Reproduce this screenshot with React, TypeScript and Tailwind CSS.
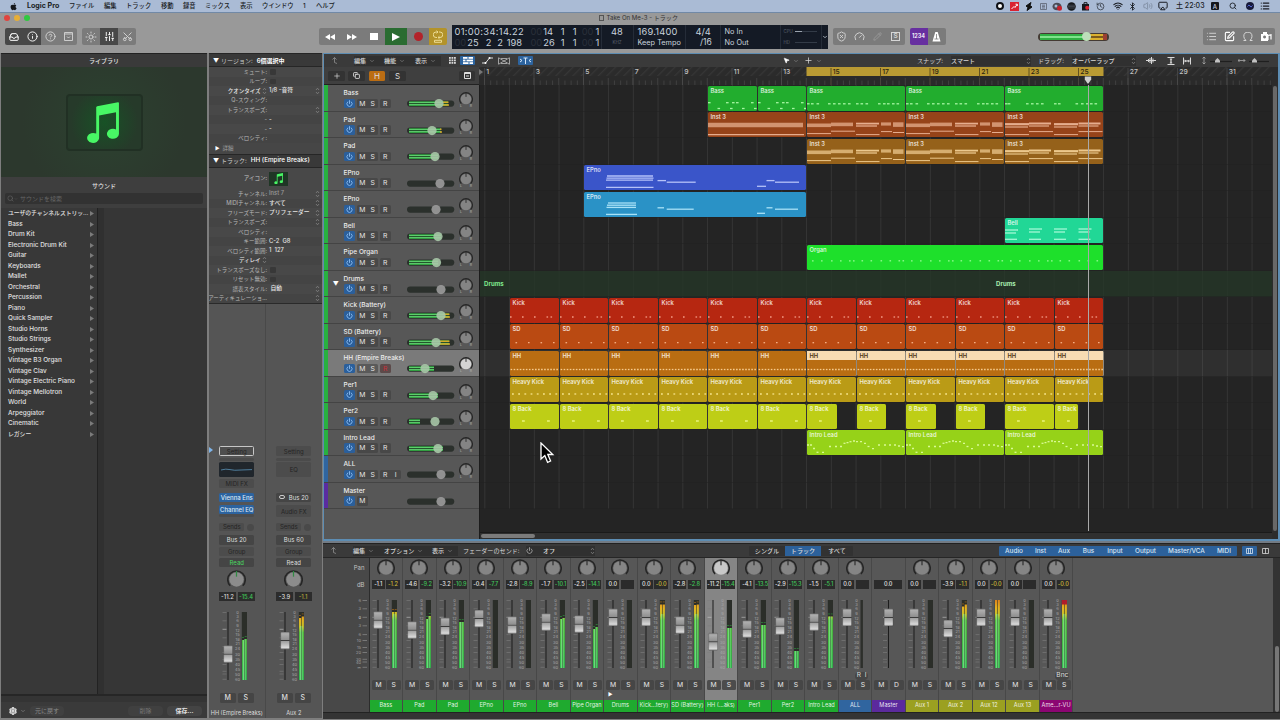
import React from 'react';
import { Inbox, Info, CircleHelp, SlidersVertical, Scissors, Search, Wifi, Bluetooth, Volume2, Airplay, List, SquarePen, History, Settings, Power, ChevronDown, Gauge, Pencil, Sun, Plus, Copy, MousePointer2, ShieldX } from 'lucide-react';

const BAR = 24.75;

type Track = {
  name: string;
  color: string;
  thumb: number;
  level?: number;
  yellow?: number;
  buttons?: string;
};

const GREEN = '#28b13f';

const TRACKS: Track[] = [
  { name: 'Bass', color: GREEN, thumb: 32, level: 41, yellow: 36 },
  { name: 'Pad', color: GREEN, thumb: 25, level: 34, yellow: 33 },
  { name: 'Pad', color: GREEN, thumb: 28, level: 31 },
  { name: 'EPno', color: GREEN, thumb: 33 },
  { name: 'EPno', color: GREEN, thumb: 29 },
  { name: 'Bell', color: GREEN, thumb: 31, level: 34 },
  { name: 'Pipe Organ', color: GREEN, thumb: 29.5, level: 31 },
  { name: 'Drums', color: GREEN, thumb: 34 },
  { name: 'Kick (Battery)', color: GREEN, thumb: 34, level: 42, yellow: 36 },
  { name: 'SD (Battery)', color: GREEN, thumb: 29, level: 42, yellow: 33 },
  { name: 'HH (Empire Breaks)', color: GREEN, thumb: 18, level: 27 },
  { name: 'Per1', color: GREEN, thumb: 26, level: 31 },
  { name: 'Per2', color: GREEN, thumb: 28, level: 13 },
  { name: 'Intro Lead', color: GREEN, thumb: 31, level: 36 },
  { name: 'ALL', color: '#30659f', thumb: 34, buttons: 'MSRI' },
  { name: 'Master', color: '#5a2ca0', thumb: 34, buttons: 'M' },
];

// note = [x, y, length, thickness]
type Note = [number, number, number, number?];
type Region = { start: number; end: number; notes: Note[]; selected?: boolean };
type Lane = { label: string; color: string; note: string; regions: Region[] };

const dots = (xs: number[], y: number, len = 1.6): Note[] => xs.map((x) => [x, y, len] as Note);
const every = (from: number, step: number, end: number) => {
  const out: number[] = [];
  for (let x = from; x < end; x += step) out.push(x);
  return out;
};

const bassA: Note[] = [...dots([0, 18, 24, 28, 43], 16.7, 2.6), ...dots([9.5, 22, 34, 46], 22.5, 2.6)];
const bassB = dots([0, 4, 9.5, 21, 26, 31, 36, 41, 49, 53.5, 58.5, 71, 76, 80, 85, 89.5], 17.8, 2.6);
const bassC = dots([0, 2.8, 21, 26, 31, 36, 49, 53, 70.5, 76, 81, 85, 89.5], 17.8, 2.6);
const instA: Note[] = [[0, 13, 95, 4.6], [0, 22.6, 96, 1.2]];
const instB: Note[] = [
  [0, 13.3, 24, 3.6], [24, 12.4, 22, 3.6], [49, 11.6, 23, 1.8], [49, 14, 21, 1.3], [74, 12, 10, 3.2], [86, 12.6, 10.5, 4.6],
  [0, 21.6, 24, 1], [24, 19.2, 24, 1], [49, 22.6, 23.5, 1], [74, 19.6, 11, 1], [86, 20.5, 11, 1],
];
const instC: Note[] = [
  [0, 12.2, 24, 2.2], [0, 15, 23, 1.2], [24, 11.5, 22, 2], [24, 14, 20, 1.2], [49, 12.2, 24, 2.2], [49, 15, 23, 1.2], [73.5, 11.5, 22, 2], [73.5, 14, 20, 1.2],
  [0, 22.6, 24, 1], [24, 19.6, 24, 1], [49, 22.6, 24, 1], [73.5, 19.6, 24, 1],
];
const leadA: Note[] = ([
  [0, 15], [3, 15], [6, 18.5], [9.5, 22.3], [15, 22.3], [22, 16.5], [28, 16.5], [33, 16.5], [36.5, 13.3], [39.5, 12.6], [42.5, 11.7], [46, 11], [49, 11.7],
  [53, 11.7], [57, 13.3], [60.5, 16.5], [65, 18.6], [71, 15], [77, 15], [82, 15], [87, 15], [91, 16], [95, 16.7],
] as number[][]).map(([x, y]) => [x, y, 2] as Note);

const starts = [2, 4, 6, 8, 10, 12, 14, 16, 18, 20, 22, 24];
const loop = (notes: Note[]): Region[] => starts.map((s) => ({ start: s, end: s + 2, notes }));
const organ = every(0, 49.5, 297).flatMap((o) => [5, 14, 24, 33, 42, 46].map((x) => x + o)).filter((x) => x < 290);

const LANES: (Lane | null)[] = [
  {
    label: 'Bass', color: '#22ad2e', note: '#a6f5a2', regions: [
      { start: 10, end: 12, notes: bassA }, { start: 12, end: 14, notes: bassA }, { start: 14, end: 18, notes: bassB },
      { start: 18, end: 22, notes: bassB }, { start: 22, end: 26, notes: bassC },
    ],
  },
  {
    label: 'Inst 3', color: '#964319', note: '#e6ad8e', regions: [
      { start: 10, end: 14, notes: instA }, { start: 14, end: 18, notes: instB }, { start: 18, end: 22, notes: instB }, { start: 22, end: 26, notes: instC },
    ],
  },
  {
    label: 'Inst 3', color: '#95611a', note: '#ecc88d', regions: [
      { start: 14, end: 18, notes: instB }, { start: 18, end: 22, notes: instB }, { start: 22, end: 26, notes: instC },
    ],
  },
  {
    label: 'EPno', color: '#3a55c9', note: '#b5c2f8', regions: [{
      start: 5, end: 14, notes: [
        [23, 11, 46], [22.5, 13.2, 47], [22, 15.2, 47], [22, 22.4, 47.5], [73.5, 15.6, 8.5], [82.7, 17.2, 29],
        [173, 21.3, 9], [182.5, 15.6, 8], [191, 17.2, 24],
      ],
    }],
  },
  {
    label: 'EPno', color: '#2a92c6', note: '#a9e2f7', regions: [{
      start: 5, end: 14, notes: [
        [24, 11, 28], [23, 13.2, 29], [22.5, 15.4, 29.5], [22, 22.4, 31], [73.5, 15.8, 6.5], [82.7, 17.2, 27],
        [173, 21.3, 8], [182.5, 15.8, 6], [191, 17.2, 23],
      ],
    }],
  },
  {
    label: 'Bell', color: '#21d796', note: '#a4f7d6', regions: [{
      start: 22, end: 26, notes: [0, 24, 49, 73.5].flatMap((x, i) => [[x, i ? 11 : 12, 13], [x, i ? 14 : 15, 11], [x, 21.3, 12]] as Note[]),
    }],
  },
  { label: 'Organ', color: '#1ee02b', note: '#95fa93', regions: [{ start: 14, end: 26, notes: dots(organ, 15.8) }] },
  null,
  { label: 'Kick', color: '#b62711', note: '#f39a84', regions: loop(dots([0, 12, 24, 36.5, 40.5], 19)) },
  { label: 'SD', color: '#ba4a12', note: '#f5ae84', regions: loop(dots([5.5, 18, 30.5, 43], 18.7)) },
  { label: 'HH', color: '#b96d12', note: '#f7cb8b', regions: loop(dots(every(0.6, 3.05, 48), 18.5)).map((r) => ({ ...r, selected: r.start >= 14 })) },
  { label: 'Heavy Kick', color: '#ba9b16', note: '#f6e48d', regions: loop(dots(every(2, 6.2, 48), 17, 1.8)) },
  {
    label: '8 Back', color: '#bece16', note: '#f0f98e', regions: starts.map((s) => ({
      start: s,
      end: s >= 14 && s < 22 ? s + 1.25 : s === 24 ? 25 : s + 2,
      notes: dots([12, 37], 17, 2.8),
    })),
  },
  { label: 'Intro Lead', color: '#96d218', note: '#d9f994', regions: [14, 18, 22].map((s) => ({ start: s, end: s + 4, notes: leadA })) },
  null,
  null,
];

type Strip = {
  name: string;
  color: string;
  db: string;
  peak?: string;
  peakColor?: string;
  cap: number;
  meter?: [number, number];
  kind?: 'mono' | 'master';
  clip?: boolean;
};

const G = '#1faa2f';
const Y = '#9ba021';
const STRIPS: Strip[] = [
  { name: 'Bass', color: G, db: '-1.1', peak: '-1.2', peakColor: '#cdbb38', cap: 20, meter: [12, 12] },
  { name: 'Pad', color: G, db: '-4.6', peak: '-9.2', cap: 30, meter: [19, 16] },
  { name: 'Pad', color: G, db: '-3.2', peak: '-10.9', cap: 26.3, meter: [22, 22] },
  { name: 'EPno', color: G, db: '-0.4', peak: '-7.7', cap: 18.5 },
  { name: 'EPno', color: G, db: '-2.8', peak: '-8.9', cap: 25 },
  { name: 'Bell', color: G, db: '-1.7', peak: '-10.1', cap: 22, meter: [19, 18] },
  { name: 'Pipe Organ', color: G, db: '-2.5', peak: '-14.1', cap: 24, meter: [29, 27] },
  { name: 'Drums', color: G, db: '0.0', cap: 17.3 },
  { name: 'Kick...tery)', color: G, db: '0.0', peak: '-0.0', peakColor: '#cdbb38', cap: 17.3, meter: [4.5, 4.5] },
  { name: 'SD (Battery)', color: G, db: '-2.8', peak: '-2.8', cap: 25, meter: [5, 4.5] },
  { name: 'HH (...aks)', color: G, db: '-11.2', peak: '-15.4', cap: 41.7, meter: [28, 28] },
  { name: 'Per1', color: G, db: '-4.1', peak: '-13.5', cap: 29, meter: [25, 25] },
  { name: 'Per2', color: G, db: '-2.9', peak: '-15.3', cap: 26, meter: [51, 51] },
  { name: 'Intro Lead', color: G, db: '-1.5', peak: '-5.1', cap: 22, meter: [16.5, 16.5] },
  { name: 'ALL', color: '#30659f', db: '0.0', cap: 17.3, kind: 'mono' },
  { name: 'Master', color: '#5b2a9d', db: '0.0', cap: 17.3, kind: 'master' },
  { name: 'Aux 1', color: Y, db: '0.0', cap: 17.3 },
  { name: 'Aux 2', color: Y, db: '-3.9', peak: '-1.1', peakColor: '#cdbb38', cap: 28.5, meter: [6.5, 4.5] },
  { name: 'Aux 12', color: Y, db: '0.0', peak: '-0.0', peakColor: '#cdbb38', cap: 17.3, meter: [0, 0] },
  { name: 'Aux 13', color: Y, db: '0.0', cap: 17.3 },
  { name: 'Ame...r-VU', color: '#8b0672', db: '0.0', peak: '-0.0', peakColor: '#cdbb38', cap: 17.3, meter: [0, 0], clip: true },
];

const LIBRARY = [
  'ユーザのチャンネルストリッ…', 'Bass', 'Drum Kit', 'Electronic Drum Kit', 'Guitar', 'Keyboards', 'Mallet', 'Orchestral', 'Percussion', 'Piano',
  'Quick Sampler', 'Studio Horns', 'Studio Strings', 'Synthesizer', 'Vintage B3 Organ', 'Vintage Clav', 'Vintage Electric Piano',
  'Vintage Mellotron', 'World', 'Arpeggiator', 'Cinematic', 'レガシー',
];

const SCALE: [string, number][] = [
  ['0', 0.3], ['3', 4.5], ['6', 8.9], ['9', 13.4], ['12', 18], ['15', 22.5], ['18', 27], ['21', 31.7], ['24', 36.3], ['30', 42], ['35', 47.3],
  ['40', 52.3], ['45', 57.2], ['50', 62.4], ['60', 67.2],
];
const FADER_TICKS = [0.5, 8.8, 17.3, 25.8, 34.6, 40.5, 47.5, 52.5, 59.3, 62, 67.3];

const Updown = () => (
  <svg width="5" height="8" viewBox="0 0 5 8" className="shrink-0 text-[#8a8a8a]">
    <path d="M1 3 L2.5 1.2 L4 3 M1 5 L2.5 6.8 L4 5" fill="none" stroke="currentColor" strokeWidth="0.7" />
  </svg>
);

const Chevron = () => <ChevronDown size={6} strokeWidth={2} className="shrink-0 text-[#9a9a9a]" />;

const NoteIcon = ({ size }: { size: number }) => (
  <svg width={size} height={size * 1.26} viewBox="0 0 34 43">
    <path
      d="M10.5 5.5 Q10.5 4.6 11.5 4.3 L33 .2 Q34 .1 34 1.1 V33 A6.2 5.2 0 1 1 31 28.4 V10.5 L13.5 14 V37.5 A6.2 5.2 0 1 1 10.5 32.7 Z"
      fill="#48f765"
    />
  </svg>
);

const Knob = ({ size, face, pointer = '#2b2b2b' }: { size: number; face: string; pointer?: string }) => (
  <svg width={size} height={size} viewBox="0 0 20 20" className="shrink-0">
    <path d="M3.4 16.6 A9.2 9.2 0 1 1 16.6 16.6" fill="none" stroke="#262626" strokeWidth="1.7" />
    <circle cx="10" cy="10" r="7.6" fill={face} />
    <path d="M10 1 V7" stroke={pointer} strokeWidth="1.3" />
  </svg>
);

const Fader = ({ cap, meter, kind, clip }: { cap: number; meter?: [number, number]; kind?: string; clip?: boolean }) => {
  const x = kind === 'master' ? 16.5 : 9;
  return (
    <svg width="33" height="76" viewBox="0 -4 33 76" className="block shrink-0">
      <defs>
        <linearGradient id="meterFill" gradientUnits="userSpaceOnUse" x1="0" y1="0" x2="0" y2="68">
          <stop offset="0" stopColor="#e0841c" />
          <stop offset="0.12" stopColor="#e5b321" />
          <stop offset="0.22" stopColor="#c4c22a" />
          <stop offset="0.3" stopColor="#55bd3e" />
          <stop offset="1" stopColor="#35b950" />
        </linearGradient>
        <linearGradient id="capFill" x1="0" y1="0" x2="0" y2="1">
          <stop offset="0" stopColor="#8c8c8c" />
          <stop offset="0.1" stopColor="#adadad" />
          <stop offset="0.46" stopColor="#8f8f8f" />
          <stop offset="0.5" stopColor="#2f2f2f" />
          <stop offset="0.55" stopColor="#a0a0a0" />
          <stop offset="0.9" stopColor="#d8d8d8" />
          <stop offset="1" stopColor="#8a8a8a" />
        </linearGradient>
      </defs>
      {FADER_TICKS.map((y) => (
        <path key={y} d={`M${x - 5.5} ${y} h4`} stroke={y === 17.3 ? '#c8c8c8' : '#7d7d7d'} strokeWidth="0.6" />
      ))}
      <rect x={x - 0.5} y="0" width="1" height="68" fill="#1d1d1d" />
      {kind !== 'master' && SCALE.map(([t, y]) => (
        <text key={t} x="18.6" y={y + 1.5} textAnchor="middle" fontSize="4" fill="#a8a8a8">{t}</text>
      ))}
      {kind === 'mono' && <rect x="22.5" y="0" width="2.4" height="68" fill="#2d2f2b" />}
      {!kind && (
        <>
          <rect x="22.8" y="0" width="5.2" height="68" fill="#2b2e29" />
          {meter && meter.map((top, i) => (
            <g key={i}>
              <rect x={23 + i * 2.7} y={top} width="2.2" height={68 - top} fill="url(#meterFill)" />
              <rect x={24 + i * 1.7} y={Math.max(top, 14)} width="0.6" height={68 - Math.max(top, 14)} fill="#8bf09a" />
              {top > 4 && <rect x={23 + i * 2.7} y={Math.max(1, top - 3)} width="2" height="0.9" fill={top < 14 ? '#8d5d1b' : '#2d7a38'} />}
            </g>
          ))}
          {clip && <rect x="22.8" y="0" width="5.2" height="4.5" fill="#b01d2a" />}
        </>
      )}
      <rect x={x - 4.3} y={cap - 8.5} width="8.8" height="17.2" rx="0.8" fill="url(#capFill)" stroke="#404040" strokeWidth="0.3" />
    </svg>
  );
};

const MenuBar = () => {
  const items: [string, string][] = [
    ['ファイル', 'w-[35px]'], ['編集', 'w-[22px]'], ['トラック', 'w-[35px]'], ['移動', 'w-[22px]'], ['録音', 'w-[22px]'],
    ['ミックス', 'w-[35px]'], ['表示', 'w-[22px]'], ['ウインドウ', 'w-[41px]'], ['1', 'w-[13px]'], ['ヘルプ', 'w-[30px]'],
  ];
  return (
    <div className="flex h-[12px] items-center bg-[#aabbd5] text-[6.3px] font-medium text-[#1a1d24]">
      <svg width="9" height="9" viewBox="0 0 24 24" className="ml-[9px]">
        <path fill="#15171c" d="M17.6 12.7c0-2.5 2-3.7 2.1-3.8-1.2-1.7-3-1.9-3.6-1.9-1.5-.2-3 .9-3.7.9-.8 0-2-.9-3.2-.9-1.7 0-3.2 1-4.1 2.4-1.7 3-.4 7.4 1.3 9.8.8 1.2 1.8 2.5 3.1 2.5 1.2-.1 1.7-.8 3.2-.8s1.9.8 3.2.8c1.3 0 2.2-1.2 3-2.4.9-1.4 1.3-2.7 1.3-2.8-.1 0-2.6-1-2.6-3.8zM15.2 5.5c.7-.8 1.1-2 1-3.1-1 0-2.2.7-2.9 1.5-.6.7-1.2 1.9-1 3 1.1.1 2.2-.6 2.9-1.4z" />
      </svg>
      <span className="ml-[9px] w-[42px] text-[7.1px] font-bold">Logic Pro</span>
      {items.map(([t, w]) => <span key={t} className={`${w} h-[9px] shrink-0 leading-[9px] whitespace-nowrap`}>{t}</span>)}
      <div className="ml-auto flex items-center pr-[10px]">
        <span className="mr-[6px] size-[8px] rounded-full border-[2.5px] border-[#0d0f14] bg-white" />
        <svg width="9" height="9" viewBox="0 0 9 9" className="mr-[6px]"><rect width="9" height="9" fill="#d92432" /><path d="M1.5 7 L4 4.5 L5 5.5 L7 2.5 M5.5 2.2 H7.3 V4" stroke="#fff" fill="none" /></svg>
        <svg width="8" height="9" viewBox="0 0 8 9" className="mr-[7px]"><path d="M6 .5 L1 4 L3 5.5 L2 8.5 L7 5 L5 3.5 Z" fill="#111" stroke="#111" /></svg>
        <svg width="7" height="7" viewBox="0 0 7 7" className="mr-[5px]"><path d="M.5.5h6v6h-6z M2 2.2h3 M2 3.6h3 M2 5h3" fill="none" stroke="#5b6270" strokeWidth=".8" /></svg>
        <svg width="11" height="9" viewBox="0 0 11 9" className="mr-[4px]"><ellipse cx="5" cy="4.5" rx="4.5" ry="3.8" fill="#4b4b55" /><circle cx="4" cy="4" r="1.5" fill="#aabbd5" /><circle cx="7.5" cy="6.2" r="2.5" fill="#c8202c" /></svg>
        <svg width="9" height="9" viewBox="0 0 9 9" className="mr-[5px]"><circle cx="4.5" cy="4.5" r="4.3" fill="#16181d" /><path d="M1 3.2h7M1 4.6h7M1 6h7" stroke="#69707e" strokeWidth=".5" /></svg>
        <svg width="9" height="9" viewBox="0 0 9 9" className="mr-[6px]"><rect x="1" y="2" width="7" height="6.5" fill="#16181d" /><path d="M3 2V.7h3V2" stroke="#16181d" fill="none" /><circle cx="6.2" cy="5.8" r="2" fill="#d92432" /></svg>
        <History size={9} strokeWidth={2} className="mr-[8px] text-[#30353f]" />
        <Wifi size={10} strokeWidth={2.6} className="mr-[5px]" />
        <Bluetooth size={9} strokeWidth={2.4} className="mr-[6px]" />
        <Volume2 size={10} className="mr-[5px] text-[#7c899e]" />
        <Airplay size={10} strokeWidth={2.4} className="mr-[8px]" />
        <span className="mr-[7px] w-[28px] whitespace-nowrap text-[7px]">土 22:03</span>
        <span className="mr-[10px] flex h-[8px] w-[8px] items-center justify-center rounded-[1px] bg-[#15171c] text-[6px] text-[#c9d4e6]">A</span>
        <Search size={8} strokeWidth={2.6} className="mr-[9px]" />
        <svg width="8" height="8" viewBox="0 0 8 8" className="mr-[6px]"><circle cx="4" cy="4" r="4" fill="#171a3a" /><path d="M1.5 4.5 Q3 2 4 4 T6.5 3.5" stroke="#5b6fe0" fill="none" /></svg>
        <List size={10} strokeWidth={3} />
      </div>
    </div>
  );
};

const Tool = ({ active, children }: { active?: boolean; children?: React.ReactNode }) => (
  <div className={`flex h-[17px] w-[18px] items-center justify-center ${active ? 'bg-[#484848] text-white' : 'bg-[#7b7b7b] text-[#d6d6d6]'}`}>
    {children}
  </div>
);

const Dim = ({ children }: { children: React.ReactNode }) => <span className="text-[#2a303a]">{children}</span>;

const Lcd = () => (
  <div className="ml-[4.5px] flex h-[24px] w-[376px] bg-[#141a25] text-[9.3px] leading-[11.5px] whitespace-pre text-[#c9d3dd]">
    <div className="w-[76px] pt-[1px] pl-[3px]">
      <div className="tracking-[0.35px]">01:00:34:14.22</div>
      <div className="flex"><Dim>00</Dim><span className="w-[19.5px] pl-[1px]">25</span><span className="w-[11.5px]">2</span><span className="w-[9.5px]">2</span><span>198</span></div>
    </div>
    <div className="w-[74px] border-r border-[#252c38] pt-[1px] pl-[3px]">
      {['14', '26'].map((n) => (
        <div key={n} className="flex"><Dim>00</Dim><span className="w-[18.5px] pl-[1px]">{n}</span><span className="w-[12px]">1</span><span className="w-[9px]">1</span><Dim>00</Dim><span className="pl-[2px]">1</span></div>
      ))}
    </div>
    <div className="w-[32px] border-r border-[#252c38] pt-[1px] text-center">
      <div>48</div>
      <div className="text-[4.5px] text-[#5d6672]">KHZ</div>
    </div>
    <div className="w-[52px] border-r border-[#252c38] pt-[1px] pl-[4px]">
      <div className="tracking-[0.2px]">169.1400</div>
      <div className="text-[7.3px]">Keep Tempo</div>
    </div>
    <div className="w-[35px] border-r border-[#252c38] pt-[1px] pl-[10px]">
      <div>4/4</div>
      <div className="pl-[4.5px] text-[8.5px]">/16</div>
    </div>
    <div className="w-[60px] border-r border-[#252c38] pt-[1px] pl-[4px] text-[7.3px]">
      <div>No In</div>
      <div>No Out</div>
    </div>
    <div className="w-[41px] border-r border-[#252c38] pt-[1px] pl-[3px] text-[4.3px] text-[#5d6672]">
      <div className="flex items-center"><span className="w-[11px]">CPU</span><span className="h-[1.5px] w-[7px] bg-[#9aa3ae]" /><span className="h-[1px] w-[15px] bg-[#333b47]" /></div>
      <div className="flex items-center"><span className="w-[11px]">HD</span><span className="h-[1px] w-[22px] bg-[#333b47]" /></div>
    </div>
    <div className="flex flex-1 items-center justify-center"><ChevronDown size={6} strokeWidth={3} /></div>
  </div>
);

const TopBar = () => (
  <div className="h-[41px] bg-[#999999]">
    <div className="flex h-[11px] items-center border-t border-[#7189a6]">
      <span className="ml-[4px] size-[5.5px] rounded-full bg-[#e0443e]" />
      <span className="ml-[4.5px] size-[5.5px] rounded-full bg-[#e6ae37]" />
      <span className="ml-[4.5px] size-[5.5px] rounded-full bg-[#2fc840]" />
      <span className="ml-[569px] h-[6px] w-[5px] border border-[#555]" />
      <span className="ml-[3px] text-[6.1px] text-[#333]">Take On Me-3 - トラック</span>
    </div>
    <div className="flex h-[27px] items-center">
      <div className="ml-[5px] flex overflow-hidden rounded-[2px]">
        <Tool active><Inbox size={10} strokeWidth={2.4} /></Tool>
        <Tool active><Info size={11} /></Tool>
        <Tool><CircleHelp size={11} /></Tool>
        <Tool><svg width="9" height="9" viewBox="0 0 9 9"><path d="M.5.5h8v8h-8z M.5 2h8 M3 4.5l1.5 1.5L6 4.5" fill="none" stroke="currentColor" strokeWidth=".9" /></svg></Tool>
      </div>
      <div className="ml-[5px] flex overflow-hidden rounded-[2px]">
        <Tool><Sun size={12} strokeWidth={1.8} /></Tool>
        <Tool active><SlidersVertical size={11} /></Tool>
        <Tool><Scissors size={11} className="-rotate-90" /></Tool>
      </div>
      <div className="ml-[183px] flex h-[17px] overflow-hidden rounded-[2px] text-white">
        <div className="flex w-[22px] items-center justify-center bg-[#7b7b7b]"><svg width="10" height="6" viewBox="0 0 10 6"><path d="M5 0V6L0 3z M10 0V6L5 3z" fill="currentColor" /></svg></div>
        <div className="flex w-[22px] items-center justify-center bg-[#7b7b7b]"><svg width="10" height="6" viewBox="0 0 10 6"><path d="M0 0V6L5 3z M5 0V6L10 3z" fill="currentColor" /></svg></div>
        <div className="flex w-[22px] items-center justify-center bg-[#7b7b7b]"><span className="size-[7.5px] bg-white" /></div>
        <div className="flex w-[22px] items-center justify-center bg-[#2a6c31]"><svg width="8" height="8" viewBox="0 0 8 8"><path d="M0 0L8 4L0 8z" fill="currentColor" /></svg></div>
        <div className="flex w-[22px] items-center justify-center bg-[#7b7b7b]"><span className="size-[9px] rounded-full bg-[#b3232a]" /></div>
        <div className="flex w-[18px] flex-col items-center justify-center bg-[#b3932a]">
          <svg width="10" height="13" viewBox="0 0 10 13">
            <path d="M4 7.5H3A2.5 2.5 0 0 1 3 2H4.5M6 2H7A2.5 2.5 0 0 1 7 7.5H5.5M3.5.7L5 2L3.5 3.3M6.5 6.2L5 7.5L6.5 8.8M1.5 10.3h7v2h-7z" fill="none" stroke="#f2e3a0" strokeWidth=".9" />
          </svg>
        </div>
      </div>
      <Lcd />
      <div className="ml-[5px] flex overflow-hidden rounded-[2px]">
        <Tool><ShieldX size={11} /></Tool>
        <Tool><Gauge size={11} /></Tool>
        <Tool><Pencil size={9} className="opacity-40" /></Tool>
        <Tool><span className="flex size-[9px] items-center justify-center border border-[#d6d6d6] text-[6.5px] font-semibold">S</span></Tool>
      </div>
      <div className="ml-[5px] flex overflow-hidden rounded-[2px]">
        <div className="flex h-[17px] w-[18px] items-center justify-center bg-[#6730a0] text-[5.6px] font-semibold text-white">1234</div>
        <Tool><svg width="9" height="10" viewBox="0 0 9 10"><path d="M3.3 0h2.4L8.5 9.5h-8z" fill="#fff" /><path d="M4.5 7V2 M2.5 7h4" stroke="#7b7b7b" strokeWidth=".8" /></svg></Tool>
      </div>
      <div className="ml-[92px] flex h-[8px] w-[71px] items-center rounded-full bg-[#443a33] px-[2px]">
        <div className="relative flex h-[6px] w-full overflow-visible">
          <div className="w-[47px] border-y-[2.5px] border-[#2fb043] bg-[#7fe38b]" />
          <div className="w-[16px] border-y-[2.5px] border-[#dbb02e] bg-[#7c5a1c]" />
          <div className="w-[4px] bg-[#9c3f32]" />
          <span className="absolute top-[-1.5px] left-[42px] size-[9px] rounded-full bg-[#bde0ba]" />
        </div>
      </div>
      <div className="ml-[94px] flex overflow-hidden rounded-[2px]">
        <Tool><List size={11} /></Tool>
        <Tool><SquarePen size={11} strokeWidth={2.4} className="text-white" /></Tool>
        <Tool><svg width="10" height="9" viewBox="0 0 10 9"><path d="M.5 8.5H3Q.8 6.5.8 4.3A4 4 0 0 1 9 4.3Q9 6.5 7 8.5H9.5" fill="none" stroke="currentColor" /></svg></Tool>
        <Tool><svg width="12" height="11" viewBox="0 0 12 11"><path d="M1 3h2V1h4v2h1v7H1z M4.5 4.5a1.5 1.5 0 1 0 .1 0" fill="#fff" fillRule="evenodd" /><path d="M8 9V4.5l3-.7V8.5" stroke="#fff" fill="none" strokeWidth="1.2" /></svg></Tool>
      </div>
    </div>
  </div>
);

const Library = () => (
  <div className="ml-px flex h-[665px] w-[206px] shrink-0 flex-col bg-[#373737] text-[6.4px] text-[#e0e0e0]">
    <div className="flex h-[14px] items-center justify-center border-t border-[#222] bg-[#3a3a3a] text-[6px] font-medium">ライブラリ</div>
    <div className="flex h-[110px] items-center justify-center bg-[radial-gradient(circle,#2c4230,#2c382d_70%)]">
      <div className="mt-[1px] flex h-[57px] w-[77px] items-center justify-center rounded-[4px] border-2 border-[#213024] bg-[radial-gradient(circle,#185226,#263a2a_75%)] pr-[4px]">
        <NoteIcon size={33} />
      </div>
    </div>
    <div className="flex h-[16px] items-center justify-center bg-[#3e3e3e] text-[6px] font-medium">サウンド</div>
    <div className="h-[15px] bg-[#3e3e3e] px-[4px]">
      <div className="flex h-[11px] items-center rounded-[2px] bg-[#323232] text-[6px] text-[#666]">
        <Search size={7} className="ml-[2px]" />
        <ChevronDown size={4} />
        <span className="ml-[2px]">サウンドを検索</span>
      </div>
    </div>
    <div className="flex flex-1 border-b-2 border-[#262626]">
      <div className="w-[96px] bg-[#383838] pt-[0.5px] pl-[7px]">
        {LIBRARY.map((name, i) => (
          <div key={name} className="flex h-[10.5px] items-center font-medium">
            <span className={`w-[82px] whitespace-nowrap ${i === 0 || i === 21 ? 'text-[5.8px]' : 'pt-[1px]'}`}>{name}</span>
            <svg width="4" height="5" viewBox="0 0 4 5"><path d="M0 0L4 2.5L0 5z" fill="#7b7b7b" /></svg>
          </div>
        ))}
      </div>
      <div className="w-[7px] border-l border-[#222] bg-[#303030]" />
      <div className="flex-1 bg-[#363636]" />
    </div>
    <div className="flex h-[22px] items-end border-t-[6px] border-[#343434] bg-[#3a3a3a] text-[6px]">
      <div className="flex h-[14px] w-full items-center">
        <Settings size={8} strokeWidth={4} className="ml-[8px]" />
        <span className="ml-[3px]"><Chevron /></span>
        <span className="ml-[4px] h-[10px] w-[34px] rounded-sm bg-[#404040] text-center leading-[10px] text-[#8b8b8b]">元に戻す</span>
        <span className="ml-[64px] h-[10px] w-[35px] rounded-sm bg-[#404040] text-center leading-[10px] text-[#777]">削除</span>
        <span className="ml-[4px] h-[10px] w-[35px] rounded-sm bg-[#444] text-center leading-[10px] font-bold">保存...</span>
      </div>
    </div>
  </div>
);

const ROWS_A: [string, string, boolean][] = [
  ['ミュート:', '□', false], ['ループ:', '□', false], ['クオンタイズ ⌃', '1/8 -音符', true], ['Q-スウィング:', '', false], ['トランスポーズ:', '', true],
  ['-', '-', false], ['-', '-', false], ['ベロシティ:', '', false],
];
const ROWS_B: [string, string, boolean][] = [
  ['チャンネル:', 'Inst 7', true], ['MIDIチャンネル:', 'すべて', true], ['フリーズモード:', 'プリフェーダー', true], ['トランスポーズ:', '', true], ['ベロシティ:', '', false],
  ['キー範囲:', 'C-2  G8', false], ['ベロシティ範囲:', '1  127', false], ['ディレイ ⌃', '', false], ['トランスポーズなし:', '□', false], ['リセット無効:', '□', false],
  ['譜表スタイル:', ' 自動', true], ['アーティキュレーショ…', '', true],
];

const InspectorRows = ({ rows }: { rows: [string, string, boolean][] }) => (
  <>
    {rows.map(([label, value, arrows], i) => {
      const strong = label.includes('⌃');
      return (
        <div key={i} className={`flex h-[9.5px] items-center text-[5.5px] whitespace-pre ${i % 2 ? 'bg-[#444444]' : 'bg-[#484848]'}`}>
          <span className={`flex w-[58px] shrink-0 items-center justify-end ${strong ? 'font-medium text-[#e6e6e6]' : 'text-[#b8b8b8]'}`}>
            {label.replace('⌃', '')}{strong && <Updown />}
          </span>
          {value === '□'
            ? <span className="ml-[3px] size-[5.5px] rounded-[1px] bg-[#383838]" />
            : <span className={`ml-[2px] text-[5.8px] font-medium ${value === 'Inst 7' ? 'text-[#9a9a9a]' : 'text-[#e4e4e4]'}`}>{value}</span>}
          {arrows && <span className="mr-[2px] ml-auto"><Updown /></span>}
        </div>
      );
    })}
  </>
);

const Slot = ({ cls, children }: { cls: string; children?: React.ReactNode }) => (
  <div className={`flex w-[35px] items-center justify-center rounded-[1.5px] whitespace-nowrap ${cls}`}>{children}</div>
);

const InspectorStrip = ({ first }: { first?: boolean }) => (
  <div className={`flex w-[57px] flex-col items-center pt-[142px] text-[6px] text-[#242424] ${first ? 'border-r border-[#494949]' : ''}`}>
    <Slot cls={first ? 'h-[10px] border border-[#c6c6c6] bg-[#4e4e4e]' : 'h-[10px] bg-[#4c4c4c]'}>Setting</Slot>
    <Slot cls="mt-[2px] h-[3px] bg-[#4b4b4b]" />
    {first ? (
      <Slot cls="mt-[1px] h-[15px] bg-[#20262c]">
        <svg width="31" height="6" viewBox="0 0 31 6"><path d="M0 3 Q5 1.5 9 2.6 T20 3 L31 2.6" stroke="#5a93b8" fill="none" strokeWidth=".8" /></svg>
      </Slot>
    ) : <Slot cls="mt-[1px] h-[15px] bg-[#4c4c4c]">EQ</Slot>}
    <Slot cls={first ? 'mt-[2px] h-[9px] bg-[#4c4c4c]' : 'mt-[2px] h-[9px]'}>{first ? 'MIDI FX' : ''}</Slot>
    <Slot cls={first ? 'mt-[4.5px] h-[9px] bg-[#2c639f] font-medium text-[#dce8f5]' : 'mt-[4.5px] h-[9px] bg-[#454545] text-[#dedede]'}>
      {first ? 'Vienna Ens' : <><span className="mr-[4px] h-[4px] w-[6px] rounded-full border border-[#ccc]" />Bus 20</>}
    </Slot>
    <Slot cls={first ? 'mt-[3.5px] h-[9px] bg-[#2c639f] font-medium text-[#dce8f5]' : 'mt-[3.5px] h-[12px] bg-[#4c4c4c]'}>{first ? 'Channel EQ' : 'Audio FX'}</Slot>
    {first && <Slot cls="h-[3px] bg-[#4c4c4c]" />}
    <div className="mt-[6px] flex w-[35px] items-center justify-between">
      <span className="h-[8px] w-[25px] rounded-[1.5px] bg-[#4c4c4c] text-center leading-[8px]">Sends</span>
      <span className="size-[7px] rounded-full bg-[#494949]" />
    </div>
    <Slot cls="mt-[4px] h-[9.5px] bg-[#454545] text-[#dedede]">{first ? 'Bus 20' : 'Bus 60'}</Slot>
    <Slot cls="mt-[2px] h-[9px] bg-[#4c4c4c]">Group</Slot>
    <Slot cls={`mt-[2px] h-[9.5px] bg-[#454545] ${first ? 'text-[#4ad861]' : 'text-[#dedede]'}`}>Read</Slot>
    <div className="mt-[3px]"><Knob size={19} face="#8c8c8c" pointer="#2f8a43" /></div>
    <div className="mt-[3px] flex gap-[1.5px] text-[5.8px] leading-[9px] font-medium">
      <span className="h-[9px] w-[17px] bg-[#2c2c2c] text-center text-[#dcdcdc]">{first ? '-11.2' : '-3.9'}</span>
      <span className={`h-[9px] w-[17px] bg-[#2c2c2c] text-center ${first ? 'text-[#3fc457]' : 'text-[#b0a53a]'}`}>{first ? '-15.4' : '-1.1'}</span>
    </div>
    <div className="mt-[7px] ml-[-2px]"><Fader cap={first ? 42 : 28.5} meter={first ? [28, 27] : [6, 4.5]} /></div>
    <div className="mt-[9px] flex gap-[2px] text-[7px] leading-[9.5px] font-medium text-[#ddd]">
      <span className="h-[9.5px] w-[16px] rounded-[1.5px] bg-[#454545] text-center">M</span>
      <span className="h-[9.5px] w-[16px] rounded-[1.5px] bg-[#454545] text-center">S</span>
    </div>
    <div className="mt-[5px] text-[5.6px] leading-[10px] whitespace-nowrap text-[#dcdcdc]">{first ? 'HH (Empire Breaks)' : 'Aux 2'}</div>
  </div>
);

const Inspector = () => (
  <div className="relative ml-[2px] h-[665px] w-[113px] shrink-0 overflow-hidden bg-[#555555]">
    <div className="flex h-[14px] items-center border-y border-[#262626] bg-[#393939] pl-[4px] text-[6px] text-[#ccc]">
      <span className="mr-[2px] text-[6px] text-white">▼</span>リージョン:<span className="ml-[4px] font-semibold text-white">6個選択中</span>
    </div>
    <InspectorRows rows={ROWS_A} />
    <div className="flex h-[10.5px] items-center bg-[#464646] pl-[6px] text-[5.5px] text-[#a0a0a0]"><span className="mr-[3px] text-[5px] text-white">▶</span>詳細</div>
    <div className="flex h-[14.5px] items-center border-y border-[#262626] bg-[#393939] pl-[4px] text-[6px] text-[#ccc]">
      <span className="mr-[2px] text-[6px] text-white">▼</span>トラック:<span className="ml-[4px] text-[6.3px] font-medium whitespace-nowrap text-white">HH (Empire Breaks)</span>
    </div>
    <div className="flex h-[21px] items-center bg-[#484848] text-[5.5px] text-[#c4c4c4]">
      <span className="w-[58px] text-right">アイコン:</span>
      <span className="ml-[2px] flex h-[14px] w-[19px] items-center justify-center bg-[#1f3625]"><NoteIcon size={9} /></span>
    </div>
    <InspectorRows rows={ROWS_B} />
    <div className="flex border-t border-[#2a2a2a]">
      <InspectorStrip first />
      <InspectorStrip />
    </div>
    <svg width="4" height="6" viewBox="0 0 4 6" className="absolute top-[394px] left-0"><path d="M0 0L4 3L0 6z" fill="#7fb5ea" /></svg>
  </div>
);

const Drop = ({ label, w }: { label: string; w: string }) => (
  <div className={`flex h-[10px] shrink-0 items-center bg-[#303030] font-medium ${w}`}>
    <span className="mr-[3px] whitespace-nowrap">{label}</span><Chevron />
  </div>
);

const BackArrow = () => (
  <svg width="6" height="7" viewBox="0 0 6 7" className="mr-[16px] ml-[8px] shrink-0 text-[#8f8f8f]"><path d="M.5 2.5L2.5.5L4.5 2.5M2.5.5V5.5L5 6.5" fill="none" stroke="currentColor" strokeWidth=".8" /></svg>
);

const ArrangeToolbar = () => (
  <div className="flex h-[13px] items-center bg-[#3a3a3a] text-[6.1px] text-[#d8d8d8]">
    <BackArrow />
    <Drop label="編集" w="w-[30px]" />
    <Drop label="機能" w="w-[31px]" />
    <Drop label="表示" w="w-[26px]" />
    <svg width="7" height="7" viewBox="0 0 7 7" className="mr-[4px] ml-[8px] shrink-0">
      {[0, 2.5, 5].flatMap((y) => [0, 2.5, 5].map((x) => <rect key={`${x}-${y}`} x={x} y={y} width="1.8" height="1.8" fill="#d8d8d8" />))}
    </svg>
    <span className="flex h-[9px] w-[15px] shrink-0 items-center justify-center rounded-[1px] bg-[#2d649f]">
      <svg width="10" height="7" viewBox="0 0 10 7" fill="#fff">
        <rect width="4.5" height="1.8" /><rect x="5.5" width="4.5" height="1.8" />
        <rect y="2.6" width="2.5" height="1.8" /><rect x="3.5" y="2.6" width="6.5" height="1.8" />
        <rect y="5.2" width="5.5" height="1.8" /><rect x="6.5" y="5.2" width="3.5" height="1.8" />
      </svg>
    </span>
    <svg width="11" height="7" viewBox="0 0 11 7" className="ml-[7px] shrink-0"><path d="M0 6h3.5L7.5 1H11" fill="none" stroke="#d8d8d8" /><circle cx="3.5" cy="6" r="1" fill="#fff" /><circle cx="7.5" cy="1" r="1" fill="#fff" /></svg>
    <svg width="12" height="8" viewBox="0 0 12 8" className="ml-[5px] shrink-0"><path d="M.5.5v7M11.5.5v7M1 1l5 3L1 7M11 1L6 4l5 3M3 1.5h6M3 6.5h6" fill="none" stroke="#bbb" strokeWidth=".8" /></svg>
    <span className="ml-[8px] flex h-[9px] w-[15px] shrink-0 items-center justify-center rounded-[1px] bg-[#2d649f] text-[#d5e6f8]">
      <svg width="11" height="7" viewBox="0 0 11 7"><path d="M0 2l2 1.5L0 5M11 2L9 3.5L11 5M3.5 1h4M5.5 1v6" fill="none" stroke="currentColor" strokeWidth="1" /></svg>
    </span>
    <MousePointer2 size={7} className="ml-[250px] shrink-0 fill-white text-white" />
    <span className="ml-[3px] shrink-0"><Chevron /></span>
    <Plus size={9} className="ml-[5px] shrink-0" />
    <span className="ml-[3px] shrink-0"><Chevron /></span>
    <span className="ml-[95px] w-[34px] shrink-0 whitespace-nowrap">スナップ:</span>
    <span className="flex h-[10px] w-[80px] shrink-0 items-center bg-[#303030] font-medium"><span className="flex-1">スマート</span><Updown /></span>
    <span className="ml-[7px] w-[34px] shrink-0 whitespace-nowrap">ドラッグ:</span>
    <span className="flex h-[10px] w-[64px] shrink-0 items-center bg-[#303030] font-medium whitespace-nowrap"><span className="flex-1">オーバーラップ</span><Updown /></span>
    <svg width="10" height="7" viewBox="0 0 10 7" className="ml-[10px] shrink-0"><path d="M0 3.5h10M2.5 2v3M4 1v5M5.5 0v7M7 1.5v4" stroke="#d8d8d8" /></svg>
    <svg width="8" height="8" viewBox="0 0 8 8" className="ml-[11px] shrink-0"><path d="M.5.5h7M.5 7.5h7M4 1v6M2.8 2.2L4 3.2L5.2 2.2M2.8 5.8L4 4.8L5.2 5.8" fill="none" stroke="#d8d8d8" strokeWidth="1" /></svg>
    <svg width="8" height="8" viewBox="0 0 8 8" className="ml-[8px] shrink-0"><path d="M.5.5v7M7.5.5v7M1 4h6M2 2.8L3.2 4L2 5.2M6 2.8L4.8 4L6 5.2" fill="none" stroke="#d8d8d8" strokeWidth="1" /></svg>
    <svg width="33" height="9" viewBox="0 0 33 9" className="ml-[10px] shrink-0"><path d="M3 1v7M1.5 2.5L3 1L4.5 2.5M1.5 6.5L3 8L4.5 6.5" fill="none" stroke="#aaa" strokeWidth=".8" /><path d="M9 5.5h22" stroke="#1f1f1f" strokeWidth="1.2" /><path d="M14 6.5V4.5L16.5 2L19 4.5V6.5z" fill="#c2c2c2" /></svg>
    <svg width="33" height="9" viewBox="0 0 33 9" className="ml-[4px] shrink-0"><path d="M0 4.5h7M1.5 3L0 4.5L1.5 6M5.5 3L7 4.5L5.5 6" fill="none" stroke="#aaa" strokeWidth=".8" /><path d="M11 5.5h20" stroke="#1f1f1f" strokeWidth="1.2" /><path d="M14 6.5V4.5L16.5 2L19 4.5V6.5z" fill="#c2c2c2" /></svg>
  </div>
);

const Ruler = () => {
  const bars = Array.from({ length: 32 }, (_, i) => i + 1);
  const x = (bar: number) => 5.5 + (bar - 1) * BAR;
  return (
    <svg width="793" height="18" viewBox="0 0 793 18" className="block shrink-0 bg-[#2a2a2a]" fontSize="7">
      <defs>
        <pattern id="hatch" width="6" height="6" patternUnits="userSpaceOnUse" patternTransform="rotate(45)">
          <rect width="6" height="6" fill="#2b2b2b" /><rect width="1.2" height="6" fill="#363636" />
        </pattern>
      </defs>
      <rect width="793" height="9" fill="url(#hatch)" />
      <rect x="327.5" y="0" width="297" height="9" fill="#b99a33" />
      <path d="M0 2L4 5L0 8z" fill="#777" />
      {bars.map((b) => (
        <g key={b}>
          {b % 2 === 1 && <path d={`M${x(b)} 1V18`} stroke={b > 13 && b < 26 ? '#4a3f1d' : '#4a4a4a'} strokeWidth=".8" />}
          {[0, 1, 2, 3].map((q) => <path key={q} d={`M${x(b) + q * 6.19} ${q ? 13.5 : 11}V18`} stroke="#4b4b4b" strokeWidth=".7" />)}
          {b % 2 === 1 && <text x={x(b) + 1.8} y="7" fontSize="6.8" fontWeight="500" fill={b > 14 && b < 26 ? '#2b2510' : '#c4c4c4'}>{b}</text>}
        </g>
      ))}
      <path d="M605.8 9.5h6.4v3l-2.7 4h-1l-2.7-4z" fill="#cfcfcf" />
    </svg>
  );
};

const TrackHeader = ({ track, index }: { track: Track; index: number }) => {
  const active = index === 10;
  const letters = track.buttons ?? 'MSR';
  return (
    <div className={`flex h-[26.5px] border-b border-[#444444] ${active ? 'bg-[#7a7a7a]' : 'bg-[#575757]'}`}>
      <div className="w-[4px] shrink-0" style={{ backgroundColor: track.color }} />
      <div className="flex w-[15.5px] shrink-0 items-center justify-center text-[6px] text-white">{index === 7 && '▼'}</div>
      <div className="w-[63.5px] shrink-0 pt-[4px]">
        <div className="h-[9.5px] text-[6.5px] leading-[9.5px] font-medium whitespace-nowrap text-[#ececec]">{track.name}</div>
        <div className="flex h-[9.5px] text-[6.8px] leading-[9.5px] text-[#e4e4e4]">
          <span className="flex w-[11px] items-center justify-center rounded-[1.5px] bg-[#2b5f9b]"><Power size={7} strokeWidth={3} className="text-[#8fc0f5]" /></span>
          <span className={`ml-[2.5px] flex rounded-[1.5px] ${active ? 'bg-[#5a5a5a]' : 'bg-[#484848]'}`}>
            {letters.slice(0, 2).split('').map((l) => <span key={l} className="w-[10.5px] text-center">{l}</span>)}
          </span>
          {letters.length > 2 && (
            <span className={`ml-[2px] flex rounded-[1.5px] ${active ? 'bg-[#5c4a4a] text-[#c8303a]' : 'bg-[#484848]'}`}>
              {letters.slice(2).split('').map((l) => <span key={l} className="w-[10.5px] text-center">{l}</span>)}
            </span>
          )}
        </div>
      </div>
      <svg width="48" height="11" viewBox="0 0 48 11" className="mt-[13px] shrink-0">
        <rect x="0" y="2.5" width="47.3" height="6.2" rx="3.1" fill="#2b302c" />
        {track.level && (
          <>
            <rect x="2" y="3.3" width={track.level - 2} height="4.6" fill="#2fa83f" />
            <rect x="2" y="5" width={track.level - 2} height="1.2" fill="#1f4c27" />
            <path d={`M2 4.6H${track.level} M2 6.6H${track.level}`} stroke="#78e286" strokeWidth=".7" />
          </>
        )}
        {track.yellow && <path d={`M${track.yellow} 4.3H${track.level! + 0.5} M${track.yellow} 6.9H${track.level! + 1}`} stroke="#d8a92a" strokeWidth="1.5" />}
        <circle cx={track.thumb} cy="5.6" r="4.6" fill={track.level ? '#a9c8a8' : '#9c9c9c'} fillOpacity="0.9" />
      </svg>
      {index !== 15 && (
        <div className="ml-[4px] w-[14px] pt-[7px] text-center">
          <Knob size={14} face={active ? '#d4d4d4' : '#848484'} />
          <div className="mt-[-2px] flex justify-between px-[1px] text-[3.5px] leading-[4px] text-[#b8b8b8]"><span>L</span><span>R</span></div>
        </div>
      )}
    </div>
  );
};

const RegionBlock = ({ lane, region }: { lane: Lane; region: Region }) => {
  // whole pixels, so that neighbours always keep a one pixel gap
  const left = Math.round(5.3 + (region.start - 1) * BAR);
  const width = Math.round(5.3 + (region.end - 1) * BAR) - left - 1;
  return (
    <div
      className={`absolute top-[0.5px] h-[25px] rounded-[1.5px] ${region.selected ? 'shadow-[1px_0_0_#8f8a80]' : ''}`}
      style={{ left, width, backgroundColor: lane.color }}
    >
      {region.selected && <div className="h-[9px] bg-[#f8dcb3]" />}
      <span className={`absolute top-[1px] left-[2.5px] text-[5.8px] leading-[8px] font-semibold whitespace-nowrap ${region.selected ? 'text-[#4c3512]' : 'text-[#ffffffd0]'}`}>{lane.label}</span>
      <svg width={width} height="25" className="absolute top-0 left-0">
        {region.notes.map(([x, y, len, th], i) => (
          <path key={i} d={`M${x} ${y}h${len}`} stroke={lane.note} strokeWidth={th ?? 1.3} strokeOpacity={th && th > 3 ? 0.75 : 1} />
        ))}
      </svg>
    </div>
  );
};

const Arrange = () => (
  <div className="flex h-[454px] bg-[#262626]">
    <div className="w-[155px] shrink-0 bg-[#575757]">
      {TRACKS.map((t, i) => <TrackHeader key={i} track={t} index={i} />)}
    </div>
    <div className="relative w-[793px] shrink-0 overflow-hidden border-l border-[#1c1c1c] bg-[#242424]">
      <svg width="793" height="424" className="absolute top-0 left-0">
        {Array.from({ length: 32 }, (_, i) => (
          <path key={i} d={`M${4.8 + i * BAR} 0V424`} stroke="#363636" strokeWidth="1" />
        ))}
      </svg>
      {LANES.map((lane, i) => (
        <div key={i} className={`relative h-[26.5px] border-b border-[#1f1f1f80] ${i === 7 ? 'bg-[#243626c0]' : i === 10 ? 'bg-[#ffffff0d]' : ''}`}>
          {i === 7 && (
            <>
              <span className="absolute top-[8px] left-[4px] text-[6.1px] leading-[9px] font-bold text-[#7fe98c]">Drums</span>
              <span className="absolute top-[8px] left-[516px] text-[6.1px] leading-[9px] font-bold text-[#a8eeb0]">Drums</span>
            </>
          )}
          {lane?.regions.map((r) => <RegionBlock key={r.start} lane={lane} region={r} />)}
        </div>
      ))}
      <div className="absolute top-0 left-[608px] h-[446px] w-px bg-[#a9a9a9]" />
      <svg width="15" height="22" viewBox="0 0 15 22" className="absolute top-[357px] left-[60px]">
        <path d="M1 1V17L4.8 13.5L7.6 20.3L10.6 19L7.8 12.5H12.8z" fill="#000" stroke="#fff" strokeWidth="1.3" />
      </svg>
      <div className="absolute bottom-0 left-0 flex h-[7px] w-full items-center border-t border-[#1a1a1a] bg-[#2f2f2f]">
        <div className="ml-px h-[4px] w-[54px] rounded-full bg-[#7b7b7b]" />
      </div>
    </div>
    <div className="flex-1 bg-[#2c2c2c] pt-[1px]">
      <div className="mx-auto h-[445px] w-[4px] rounded-full bg-[#686868]" />
    </div>
  </div>
);

const MixerStrip = ({ strip, index }: { strip: Strip; index: number }) => {
  const active = index === 10;
  const master = strip.kind === 'master';
  const btn = `h-[9.5px] w-[14px] rounded-[1.5px] text-center ${active ? 'bg-[#4c4c4c]' : 'bg-[#464646]'}`;
  return (
    <div className={`w-[33.52px] shrink-0 border-r border-[#484848] ${active ? 'bg-[#858585]' : 'bg-[#575757]'}`}>
      <div className="flex h-[21px] items-center justify-center pb-[1px]">
        {!master && <Knob size={18} face={active ? '#c9c9c9' : '#858585'} />}
      </div>
      <div className="mt-[1px] flex h-[9.5px] gap-[1.5px] pl-[2px] text-[5.6px] leading-[9px] font-medium tracking-[-0.1px]">
        {master ? <span className="h-[9px] w-[28px] bg-[#2b2b2b] text-center text-[#e4e4e4]">{strip.db}</span> : (
          <>
            <span className="h-[9px] w-[13.3px] bg-[#2b2b2b] text-center text-[#e4e4e4]">{strip.db}</span>
            <span className="h-[9px] w-[13.3px] bg-[#2b2b2b] text-center" style={{ color: strip.peakColor ?? '#40c55a' }}>{strip.peak}</span>
          </>
        )}
      </div>
      <div className="mt-[6.5px] ml-[-0.5px]"><Fader cap={strip.cap} meter={strip.meter} kind={strip.kind} clip={strip.clip} /></div>
      <div className="flex h-[8px] justify-end pr-[3px] text-[6.6px] leading-[7px] text-[#dcdcdc]">
        {strip.kind === 'mono' && <span className="w-[13px] rounded-sm bg-[#464646] text-center whitespace-pre">R  I</span>}
        {strip.clip && <span className="w-[14px] rounded-sm bg-[#464646] text-center">Bnc</span>}
      </div>
      <div className="flex gap-[1.3px] pl-[2px] text-[6.8px] leading-[9.5px] text-[#e6e6e6]">
        <span className={btn}>M</span>
        <span className={btn}>{master ? 'D' : 'S'}</span>
      </div>
      <div className="h-[10.5px] pl-[4px] text-[5px] leading-[8px] text-white">{index === 7 && '▶'}</div>
      <div className="flex h-[12px] justify-center overflow-hidden text-[5.6px] leading-[11.5px] whitespace-nowrap text-[#ffffffe0]" style={{ backgroundColor: strip.color }}>
        {strip.name}
      </div>
    </div>
  );
};

const Mixer = () => {
  const filters: [string, string][] = [
    ['Audio', 'w-[30px]'], ['Inst', 'w-[23px]'], ['Aux', 'w-[24px]'], ['Bus', 'w-[25px]'], ['Input', 'w-[28px]'],
    ['Output', 'w-[33px]'], ['Master/VCA', 'w-[49px]'], ['MIDI', 'w-[26px]'],
  ];
  return (
    <div className="flex h-[176px] flex-col border-t border-[#222] bg-[#575757]">
      <div className="flex h-[14px] shrink-0 items-center border-b border-[#262626] bg-[#3a3a3a] text-[6.1px] text-[#d8d8d8]">
        <BackArrow />
        <Drop label="編集" w="w-[31px]" />
        <Drop label="オプション" w="w-[48px]" />
        <Drop label="表示" w="w-[26px]" />
        <span className="ml-[5px] w-[63px] whitespace-nowrap">フェーダーのセンド:</span>
        <span className="flex h-[10px] w-[69px] items-center bg-[#303030] font-medium"><Power size={7} /><span className="ml-[10px] flex-1">オフ</span><Updown /></span>
        <div className="ml-[154px] flex h-[10px] w-[104px] items-center rounded-[1px] bg-[#323232] font-medium">
          <span className="w-[36px] text-center">シングル</span>
          <span className="h-[10px] w-[36px] bg-[#2c619b] text-center leading-[10px]">トラック</span>
          <span className="w-[32px] text-center">すべて</span>
        </div>
        <div className="ml-[146px] flex h-[10px] rounded-[1px] bg-[#2c619b] text-[6.4px] leading-[10px] font-medium text-[#d8e4f1]">
          {filters.map(([t, w]) => <span key={t} className={`${w} text-center`}>{t}</span>)}
        </div>
        <span className="ml-[5px] flex h-[10px] w-[15px] items-center justify-center rounded-[1px] bg-[#2c619b]">
          <svg width="7" height="6" viewBox="0 0 7 6"><path d="M.5.5h6v5h-6zM2.5.5v5M4.5.5v5" fill="none" stroke="#d8e4f1" strokeWidth=".8" /></svg>
        </span>
        <svg width="7" height="6" viewBox="0 0 7 6" className="ml-[5px]"><path d="M.5.5h6v5h-6zM3.5.5v5" fill="none" stroke="#d8d8d8" strokeWidth=".8" /></svg>
      </div>
      <div className="flex h-[154px] shrink-0">
        <div className="w-[46.5px] shrink-0 border-r border-[#2c2c2c] bg-[#484848] text-right text-[6px] text-[#c0c0c0]">
          <div className="pt-[5px] pr-[4px] leading-[10px]">Pan</div>
          <div className="pt-[6.5px] pr-[4px] leading-[10px]">dB</div>
          <svg width="45" height="76" viewBox="0 -4 45 76" className="mt-[6.5px] block">
            {['6', '3', '0', '3', '6', '10', '15', '20', '30', '40', '∞'].map((t, i) => (
              <g key={i}>
                <text x="38" y={FADER_TICKS[i] + 1.5} textAnchor="end" fontSize="4" fill={i === 2 ? '#ddd' : '#a0a0a0'}>{t}</text>
                <path d={`M39.5 ${FADER_TICKS[i]}h4.5`} stroke="#999" strokeWidth=".6" />
              </g>
            ))}
          </svg>
        </div>
        {STRIPS.map((s, i) => <MixerStrip key={i} strip={s} index={i} />)}
        <div className="flex-1" />
        <div className="flex w-[7px] items-end justify-center bg-[#333]"><div className="h-[66px] w-[4px] rounded-full bg-[#777]" /></div>
      </div>
      <div className="flex-1 border-t border-[#222] bg-[#343434]" />
    </div>
  );
};

export default function App() {
  return (
    <div className="h-[720px] w-[1280px] overflow-hidden bg-[#7e7e7e] font-['Inter','Noto_Sans_CJK_JP',sans-serif]">
      <MenuBar />
      <TopBar />
      <div className="flex h-[667px]">
        <Library />
        <Inspector />
        <div className="ml-px w-[957px] shrink-0">
          <div className="h-[488px] border-t border-r-2 border-b-2 border-l border-[#5d8db3]">
            <ArrangeToolbar />
            <div className="flex h-[18px] bg-[#3f3f3f]">
              <div className="flex w-[155px] shrink-0 items-center border-b border-[#222] text-[8px] text-[#ddd]">
                <span className="ml-[4px] flex h-[10px] w-[17px] items-center justify-center rounded-[1.5px] bg-[#333]"><Plus size={8} /></span>
                <span className="ml-[3px] flex h-[10px] w-[17px] items-center justify-center rounded-[1.5px] bg-[#333]"><Copy size={7} strokeWidth={3} /></span>
                <span className="ml-[4px] flex h-[10px] w-[16px] items-center justify-center rounded-[1.5px] bg-[#bb6d13]">H</span>
                <span className="ml-[4px] flex h-[10px] w-[17px] items-center justify-center rounded-[1.5px] bg-[#333]">S</span>
                <span className="ml-[53px] flex h-[10px] w-[16px] items-center justify-center rounded-[1.5px] bg-[#333]">
                  <svg width="7" height="7" viewBox="0 0 7 7"><path d="M.5.5h6v6h-6zM.5 1.5h6M2 4h3" fill="none" stroke="#ddd" /></svg>
                </span>
              </div>
              <Ruler />
              <div className="flex-1 bg-[#2b2b2b]" />
            </div>
            <Arrange />
          </div>
          <div className="h-[2px] bg-[#737b84]" />
          <Mixer />
        </div>
      </div>
    </div>
  );
}
